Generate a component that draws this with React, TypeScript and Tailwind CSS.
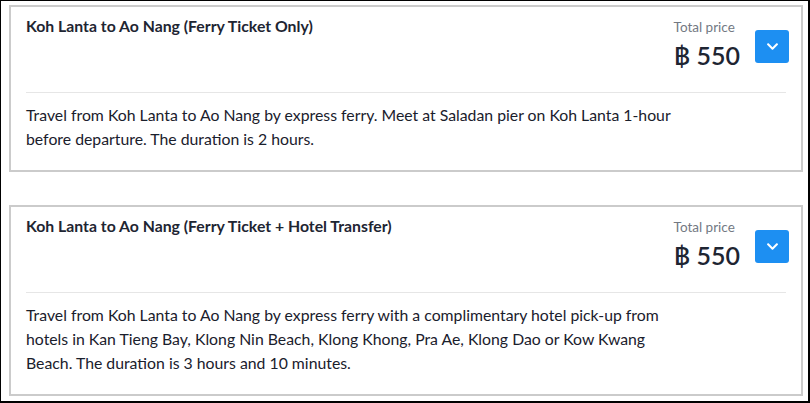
import { FaChevronDown } from "react-icons/fa";

interface Trip {
  title: string;
  price: string;
  description: string;
}

const trips: Trip[] = [
  {
    title: "Koh Lanta to Ao Nang (Ferry Ticket Only)",
    price: "฿ 550",
    description:
      "Travel from Koh Lanta to Ao Nang by express ferry. Meet at Saladan pier on Koh Lanta 1-hour before departure. The duration is 2 hours.",
  },
  {
    title: "Koh Lanta to Ao Nang (Ferry Ticket + Hotel Transfer)",
    price: "฿ 550",
    description:
      "Travel from Koh Lanta to Ao Nang by express ferry with a complimentary hotel pick-up from hotels in Kan Tieng Bay, Klong Nin Beach, Klong Khong, Pra Ae, Klong Dao or Kow Kwang Beach. The duration is 3 hours and 10 minutes.",
  },
];

function TripCard({ trip }: { trip: Trip }) {
  return (
    <div className="border-2 border-[#cbcbcb] bg-white">
      {/* header */}
      <div className="flex h-[85px] justify-between pl-[15px] pr-[12px]">
        <h3 className="pt-[9px] text-[15.8px] font-bold leading-[20px] text-[#1e2532]">
          {trip.title}
        </h3>
        <div className="flex gap-[15px]">
          <div className="pt-[11px]">
            <div className="text-[13.5px] leading-[18px] text-[#737983]">
              Total price
            </div>
            <div className="mt-[4px] text-[25px] font-semibold leading-[30px] text-[#1e2532]">
              {trip.price}
            </div>
          </div>
          <button className="mt-[23px] flex h-[33px] w-[34px] items-center justify-center rounded-[3px] bg-[#1d8ff2] text-white">
            <FaChevronDown size={13} />
          </button>
        </div>
      </div>

      <div className="mx-[15px] border-t border-[#e6e6e6]" />

      {/* description */}
      <p className="max-w-[688px] px-[15px] pb-[19px] pt-[10px] text-[15.8px] leading-[24px] text-[#1a202c]">
        {trip.description}
      </p>
    </div>
  );
}

export default function App() {
  return (
    <div
      className="h-[403px] w-[810px] border-b-2 border-l border-r-2 border-t border-black bg-white pl-[8px] pr-[5px] pt-[4px]"
      style={{ fontFamily: "Lato, 'Open Sans', sans-serif" }}
    >
      <div className="flex flex-col gap-[33px]">
        {trips.map((trip) => (
          <TripCard key={trip.title} trip={trip} />
        ))}
      </div>
    </div>
  );
}
